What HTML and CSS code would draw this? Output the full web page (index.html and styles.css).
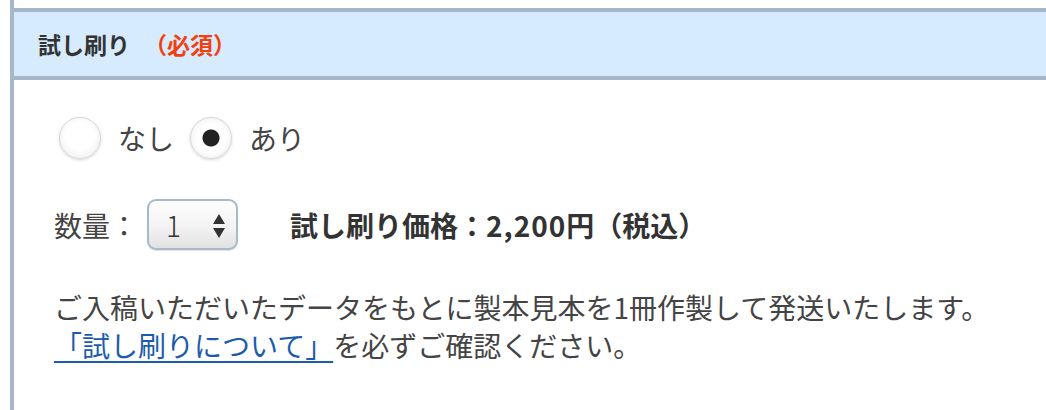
FILE: index.html
```html
<!DOCTYPE html>
<html lang="ja">
<head>
<meta charset="utf-8">
<title>試し刷り</title>
<link rel="stylesheet" href="styles.css">
</head>
<body>
<div class="section">
  <div class="head">
    <span class="head-title">試し刷り</span><span class="required">（必須）</span>
  </div>
  <div class="content">
    <div class="radio-row">
      <label class="opt"><input type="radio" name="proof" class="radio"><span class="opt-text">なし</span></label>
      <label class="opt"><input type="radio" name="proof" class="radio" checked><span class="opt-text">あり</span></label>
    </div>
    <div class="qty-row">
      <span class="qty-label">数量：</span>
      <div class="select">
        <span class="select-value">1</span>
        <svg class="select-arrows" width="12" height="24" viewBox="0 0 12 24"><path d="M6 0 L12 10 L0 10 Z" fill="#333"/><path d="M0 14 L12 14 L6 24 Z" fill="#333"/></svg>
      </div>
      <span class="price">試し刷り価格：<span class="num">2,200</span>円（税込）</span>
    </div>
    <p class="note">ご入稿いただいたデータをもとに製本見本を1冊作製して発送いたします。<br><a href="#" class="link">「試し刷りについて」</a>を必ずご確認ください。</p>
  </div>
</div>
</body>
</html>
```
FILE: styles.css
```css
html, body {
  margin: 0;
  padding: 0;
  background: #fff;
}
body {
  font-family: "Noto Sans CJK JP", "Noto Sans", sans-serif;
  color: #444;
  width: 1046px;
  height: 410px;
  overflow: hidden;
}
.section {
  margin-left: 10px;
  border-left: 4px solid #a5b7c8;
  height: 410px;
  box-sizing: border-box;
  padding-top: 8px;
}
.head {
  height: 64px;
  background: #d6ebfd;
  border-top: 4px solid #a5b7c8;
  border-bottom: 4px solid #a5b7c8;
  display: flex;
  align-items: center;
  padding-left: 24px;
  font-size: 23px;
  font-weight: bold;
  color: #333;
  line-height: 1;
}
.required {
  color: #f0400f;
  margin-left: 14px;
}
.content {
  padding-left: 40px;
}
.radio-row {
  display: flex;
  align-items: center;
  margin-top: 37px;
  height: 42px;
}
.opt {
  display: flex;
  align-items: center;
  margin-right: 16px;
}
.radio {
  appearance: none;
  -webkit-appearance: none;
  width: 42px;
  height: 42px;
  margin: 0 17px 0 5px;
  border-radius: 50%;
  border: 1px solid #d8d8d8;
  background: radial-gradient(circle at 50% 45%, #fff 0, #fff 14px, #f6f6f6 20px);
  box-shadow: 0 1px 3px rgba(0,0,0,0.16);
  box-sizing: border-box;
}
.opt + .opt .radio {
  margin-left: 0;
}
.radio:checked {
  background: radial-gradient(circle at 50% 50%, #222 0, #222 8px, #fff 9px, #fff 14px, #f6f6f6 20px);
}
.opt-text {
  font-size: 28px;
  line-height: 1;
  color: #444;
}
.qty-row {
  display: flex;
  align-items: center;
  margin-top: 40px;
  height: 51px;
}
.qty-label {
  font-size: 28px;
  line-height: 1;
  color: #444;
}
.select {
  margin-left: 9px;
  width: 91px;
  height: 51px;
  box-sizing: border-box;
  border: 2px solid #a7b9cd;
  border-radius: 9px;
  background: linear-gradient(#fdfdfd, #f3f3f3 55%, #e1e1e1);
  box-shadow: 0 1px 1px rgba(0,0,0,0.12);
  display: flex;
  align-items: center;
  padding-left: 17px;
}
.select-value {
  font-size: 28px;
  font-weight: 300;
  color: #333;
  line-height: 1;
  width: 47px;
}
.select-arrows {
  display: block;
  margin-top: 2px;
}
.price {
  margin-left: 52px;
  font-size: 28px;
  font-weight: bold;
  color: #333;
  line-height: 1;
}
.num {
  letter-spacing: 1px;
}
.note {
  margin: 38px 0 0 0;
  font-size: 28px;
  line-height: 38px;
  color: #444;
}
.link {
  color: #1c5cae;
  text-decoration: underline;
  text-decoration-thickness: 2px;
  text-underline-offset: 4px;
}
```
